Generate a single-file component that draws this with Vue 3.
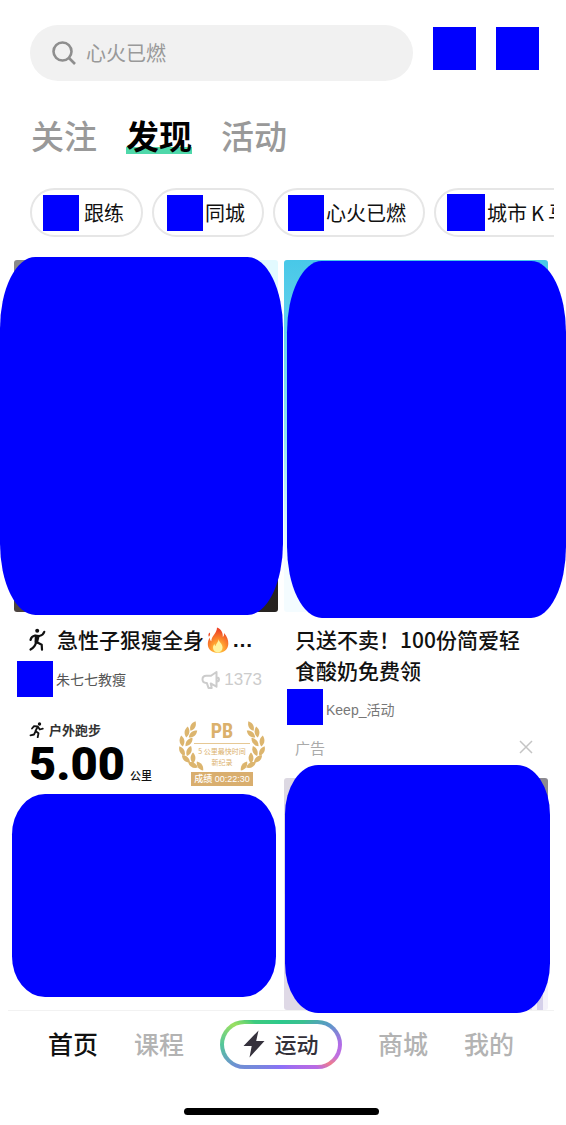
<script setup>
import { ref } from 'vue'

const keyword = ref('')
const activeTab = ref('发现')
const tabs = ['关注', '发现', '活动']
const chips = [
  { label: '跟练', kind: 'first' },
  { label: '同城', kind: '' },
  { label: '心火已燃', kind: '' },
  { label: '城市\u2009K\u2009马', kind: 'large' },
]

// Leaves of the left laurel branch: centre x, centre y, rotation
const leaves = [
  [14, 5, 28], [8, 11, 8], [14, 13, 50],
  [3, 20, -8], [10, 21, 40],
  [3, 30, -28], [10, 30, 22],
  [7, 38, -48], [14, 37, 0],
  [14, 44, -62], [21, 45, -35],
]
</script>

<template>
  <div class="app">
    <header class="header">
      <label class="search">
        <svg class="search-icon" viewBox="0 0 24 24" aria-hidden="true">
          <circle cx="10.5" cy="10.5" r="9" />
          <path d="M17 17l6 6" />
        </svg>
        <input v-model="keyword" type="search" placeholder="心火已燃" aria-label="搜索" />
      </label>
      <button class="block action" aria-label="消息"></button>
      <button class="block action" aria-label="发布"></button>
    </header>

    <nav class="tabs">
      <button
        v-for="t in tabs"
        :key="t"
        :class="['tab', { active: t === activeTab }]"
        @click="activeTab = t"
      >{{ t }}</button>
    </nav>

    <div class="chips">
      <button v-for="c in chips" :key="c.label" :class="['chip', c.kind]">
        <span class="block chip-icon"></span>{{ c.label }}
      </button>
    </div>

    <main class="feed">
      <section class="column">
        <article class="post">
          <div class="media media-video"><div class="block cover cover-video"></div></div>
          <h2 class="title one-line">
            <svg class="dancer" viewBox="0 0 22 24" aria-hidden="true">
              <circle cx="11.200" cy="2.800" r="2" class="solid" />
              <path d="M18.300 3.800c-.6 2.200-2 3.600-5 4.200L9 7.500C6.500 8 5 9.500 4.500 12M10.500 14l5.200 2.700.3 5M10 14.500c-.6 3-2.300 5.300-5.500 7" />
              <path d="M8.800 6.800l5 .6-2 8-3.300-1z" class="solid" />
            </svg>
            <span>急性子狠瘦全身</span>
            <svg class="flame" viewBox="0 0 22 26" role="img" aria-label="火">
              <defs>
                <radialGradient id="flame-fill" cx="50%" cy="88%" r="78%">
                  <stop offset="0" stop-color="#ffd84a" />
                  <stop offset=".45" stop-color="#ff9a2e" />
                  <stop offset="1" stop-color="#ee4527" />
                </radialGradient>
              </defs>
              <path fill="url(#flame-fill)" d="M10 .5c5 2 6 6 5.800 9.500 1-.8 1.400-2 1.200-4 3 3 4.500 7 4.300 11C21 22.500 17 25.800 11 25.800S.8 22.500.8 17c0-3 1-5 2-6.500 0 2 .5 3 1.500 3.800C4.500 8.500 10 6.500 10 .5zM2.500 5.500c1 1.500.8 3-.6 4.300-.8-1.600-.6-3 .6-4.300z" />
              <path fill="#fff3a0" d="M11.500 12c.3 3 4 4.500 4 8.500 0 3-2 4.800-4.700 4.800S6 23.500 6 20.800c0-1.800.8-3 1.500-3.800.1 1.200.5 1.800 1.200 2.200C8.700 16.500 11.500 15.500 11.500 12z" />
            </svg>
            <span class="dots">…</span>
          </h2>
          <div class="author">
            <span class="block avatar"></span>
            <span class="name">朱七七教瘦</span>
            <button class="cheer">
              <svg viewBox="0 0 20 20" aria-hidden="true">
                <path d="M15.500 2L10 5.800H5.200C3 5.800 1.500 7.300 1.500 9.300s1.500 3.600 3.700 3.600h.6l1.700 5h3.200l-1-4.500 5.800 3.300zM16 7.500c2.600.2 2.600 3.800 0 4" />
              </svg>
              1373
            </button>
          </div>
        </article>

        <article class="run">
          <div class="run-head">
            <div class="run-stats">
              <h3 class="run-type">
                <svg viewBox="0 0 16 16" aria-hidden="true">
                  <circle cx="10.500" cy="2" r="1.700" class="solid" />
                  <path d="M3 6.500l2-2.300 3.800.3 2 3 3-.8M8.500 5L6.500 9l3 2.300-.8 4M6.500 9.500L5 12.500l-3.500.8" />
                </svg>
                户外跑步
              </h3>
              <p class="distance"><strong>5.00</strong><span>公里</span></p>
            </div>
            <div class="badge">
              <svg class="laurel" viewBox="0 0 86 50" aria-hidden="true">
                <g v-for="side in [0, 1]" :key="side" :transform="side ? 'translate(86 0) scale(-1 1)' : ''">
                  <path
                    v-for="(l, i) in leaves"
                    :key="i"
                    :transform="`translate(${l[0]} ${l[1]}) rotate(${l[2]})`"
                    d="M0-5.500C3.200-2 3.200 2 0 5.500C-3.200 2-3.200-2 0-5.500z"
                  />
                </g>
              </svg>
              <b class="pb">PB</b>
              <span class="record">5 公里最快时间</span>
              <span class="record-new">新纪录</span>
              <span class="score">成绩 00:22:30</span>
            </div>
          </div>
          <div class="media media-map"><div class="block cover cover-map"></div></div>
        </article>
      </section>

      <section class="column">
        <article class="post promo">
          <div class="media media-poster"><div class="block cover cover-poster"></div></div>
          <h2 class="title">只送不卖！100份简爱轻食酸奶免费领</h2>
          <div class="author">
            <span class="block avatar"></span>
            <span class="name">Keep_活动</span>
          </div>
          <div class="ad-row">
            <span>广告</span>
            <button class="close" aria-label="关闭广告">
              <svg viewBox="0 0 14 14" aria-hidden="true"><path d="M1 1l12 12M13 1L1 13" /></svg>
            </button>
          </div>
        </article>
        <article class="post">
          <div class="media media-photo"><div class="block cover cover-photo"></div></div>
        </article>
      </section>
    </main>

    <footer class="footer">
      <nav class="bottom-nav">
        <a href="#home" class="current">首页</a>
        <a href="#course">课程</a>
        <button class="sport">
          <svg viewBox="0 0 22 28" aria-hidden="true"><path d="M15.500.5L.5 16h8.200L6.500 27.500 21.500 11h-8.300z" /></svg>
          <span>运动</span>
        </button>
        <a href="#mall">商城</a>
        <a href="#me">我的</a>
      </nav>
      <div class="home-bar"></div>
    </footer>
  </div>
</template>

<style>
body {
  margin: 0;
  background: #fff;
}
</style>

<style scoped>
.app {
  display: flex;
  flex-direction: column;
  min-height: 100vh;
  overflow: hidden;
  box-sizing: border-box;
  color: #111;
  font-family: "Liberation Sans", "Noto Sans CJK SC", sans-serif;
}
.app * {
  box-sizing: border-box;
}
button {
  margin: 0;
  padding: 0;
  border: 0;
  background: none;
  color: inherit;
  font: inherit;
  cursor: pointer;
}
h2, h3, p {
  margin: 0;
}
svg {
  display: block;
  flex: none;
}
.block {
  display: block;
  background: #00f;
}

.header {
  display: flex;
  gap: 20px;
  padding: 25px 27px 0 30px;
}
.search {
  display: flex;
  flex: 1;
  align-items: center;
  gap: 10px;
  min-width: 0;
  height: 56px;
  padding: 0 22px;
  border-radius: 28px;
  background: #f1f1f1;
}
.search-icon {
  width: 24px;
  height: 24px;
  fill: none;
  stroke: #8e8e8e;
  stroke-width: 2.600;
}
.search input {
  flex: 1;
  min-width: 0;
  padding: 0;
  border: 0;
  outline: 0;
  background: none;
  font: 20px/28px "Noto Sans CJK SC", sans-serif;
}
.search input::placeholder {
  color: #999;
}
.action {
  width: 43px;
  height: 43px;
  margin-top: 2px;
  background: #00f;
}

.tabs {
  display: flex;
  gap: 29px;
  padding: 32px 31px 0;
}
.tab {
  height: 44px;
  color: #999;
  font: 500 33px/44px "Noto Sans CJK SC", sans-serif;
}
.tab.active {
  background: linear-gradient(#4fd8aa, #4fd8aa) 0 34px / 100% 7px no-repeat;
  color: #000;
  font-weight: 700;
}

.chips {
  display: flex;
  gap: 9px;
  margin: 31px 12px 0 30px;
  overflow: hidden;
}
.chip {
  display: flex;
  flex: none;
  align-items: center;
  gap: 2px;
  height: 49px;
  padding: 0 17px 0 13px;
  border: 2px solid #e6e6e6;
  border-radius: 25px;
  font: 20px/28px "Noto Sans CJK SC", sans-serif;
}
.chip-icon {
  width: 36px;
  height: 36px;
}
.chip.first {
  gap: 5px;
  padding-left: 11px;
}
.chip.large {
  padding-left: 11px;
}
.chip.large .chip-icon {
  width: 38px;
  height: 37px;
}

.feed {
  display: grid;
  flex: 1;
  grid-template-columns: 1fr 1fr;
  gap: 6px;
  padding: 23px 18px 0 14px;
}
.column {
  min-width: 0;
}
.media {
  position: relative;
  border-radius: 3px;
}
.cover {
  position: absolute;
  border-radius: 12.5% / 20%;
}
.media-video {
  aspect-ratio: 3 / 4;
  background: linear-gradient(90deg, #8a8a8a 50%, #e2faff 50%) 0 0 / 100% 50% no-repeat,
    linear-gradient(90deg, #4c4440, #262220) 0 100% / 100% 50% no-repeat;
}
.cover-video {
  inset: -3px -5px -3px -14px;
}
.media-poster {
  aspect-ratio: 3 / 4;
  background: linear-gradient(#48c8e8, #8fe2f0 50%, #f4fcff 85%);
}
.cover-poster {
  inset: 1px -18px -6px 3px;
}
.title {
  margin-top: 12px;
  padding: 0 22px 0 11px;
  color: #111;
  font: 500 21px/31px "Noto Sans CJK SC", sans-serif;
}
.one-line {
  display: flex;
  align-items: center;
  padding: 0 0 0 12px;
  white-space: nowrap;
}
.dancer {
  width: 22px;
  height: 24px;
  margin-right: 9px;
  fill: none;
  stroke: #111;
  stroke-width: 2.200;
  stroke-linecap: round;
  stroke-linejoin: round;
}
.solid {
  fill: #111;
  stroke: none;
}
.flame {
  width: 22px;
  height: 26px;
  margin: 0 3px;
}
.dots {
  font-family: "Liberation Sans", sans-serif;
  font-weight: 700;
}
.author {
  display: flex;
  align-items: center;
  gap: 3px;
  margin-top: 6px;
  padding: 0 16px 0 3px;
}
.avatar {
  width: 36px;
  height: 36px;
}
.name {
  flex: 1;
  padding-top: 2px;
  color: #555;
  font-size: 14px;
  line-height: 20px;
}
.cheer {
  display: flex;
  align-items: center;
  gap: 3px;
  padding-top: 2px;
  color: #ccc;
  font-size: 17px;
  line-height: 20px;
}
.cheer svg {
  width: 20px;
  height: 20px;
  fill: none;
  stroke: #ccc;
  stroke-width: 2;
  stroke-linejoin: round;
}
.promo .author {
  margin-top: 3px;
}
.promo .name {
  padding-top: 5px;
  color: #777;
}
.ad-row {
  display: flex;
  align-items: center;
  justify-content: space-between;
  height: 53px;
  padding: 0 15px 9px 11px;
  color: #aaa;
  font-size: 15px;
}
.close svg {
  width: 14px;
  height: 14px;
  stroke: #c4c4c4;
  stroke-width: 1.500;
}
.media-photo {
  aspect-ratio: 264 / 232;
  background: linear-gradient(90deg, #dcd8e2 50%, #8c8a90 50%) 0 0 / 100% 50% no-repeat,
    linear-gradient(90deg, #dfd9e6 94%, #f4f2fa 94% 96%, #d5d0ea 96% 98%, #f4f2fa 98%) 0 100% / 100% 50% no-repeat;
}
.cover-photo {
  inset: -13px -2px -3px 1px;
}

.run {
  padding-top: 23px;
}
.run-head {
  display: flex;
  justify-content: space-between;
  height: 74px;
  padding: 1px 13px 0 15px;
}
.run-type {
  display: flex;
  align-items: center;
  gap: 4px;
  color: #333;
  font: 700 13px/18px "Noto Sans CJK SC", sans-serif;
}
.run-type svg {
  width: 16px;
  height: 16px;
  fill: none;
  stroke: #111;
  stroke-width: 1.800;
  stroke-linecap: round;
  stroke-linejoin: round;
}
.distance {
  display: flex;
  align-items: baseline;
  gap: 5px;
}
.distance strong {
  color: #000;
  font-family: Roboto, sans-serif;
  font-size: 47px;
  font-weight: 900;
  line-height: 50px;
}
.distance span {
  font: 500 11px/16px "Noto Sans CJK SC", sans-serif;
}
.badge {
  position: relative;
  display: flex;
  flex-direction: column;
  align-items: center;
  width: 86px;
  height: 65px;
  color: #dbb16c;
  font: 7px/11px "Noto Sans CJK SC", sans-serif;
}
.laurel {
  position: absolute;
  top: 0;
  left: 0;
  width: 86px;
  height: 50px;
  fill: #dcb56e;
}
.pb {
  width: 56px;
  height: 23px;
  border-bottom: 1px solid #e6c894;
  font: 700 20px/20px "Roboto Condensed", Roboto, sans-serif;
  text-align: center;
}
.record {
  margin-top: 2px;
}
.score {
  width: 62px;
  height: 14px;
  margin-top: 4px;
  background: #d9ae6e;
  color: #fff;
  font: 500 9px/14px "Liberation Sans", "Noto Sans CJK SC", sans-serif;
  text-align: center;
}
.media-map {
  height: 201px;
  margin: 0 2px 0 12px;
}
.cover-map {
  inset: 0 0 -2px -14px;
}

.footer {
  padding: 0 12px 10px 8px;
}
.bottom-nav {
  display: flex;
  align-items: center;
  justify-content: space-between;
  height: 67px;
  padding: 0 40px;
  border-top: 1px solid #f2f2f2;
  font: 500 25px/34px "Noto Sans CJK SC", sans-serif;
}
.bottom-nav a {
  padding-bottom: 3px;
  color: #b3b3b3;
  text-decoration: none;
}
.bottom-nav .current {
  color: #111;
}
.sport {
  display: flex;
  align-items: center;
  justify-content: center;
  gap: 9px;
  width: 122px;
  height: 49px;
  border: 4px solid transparent;
  border-radius: 25px;
  background: linear-gradient(#fff, #fff) padding-box,
    conic-gradient(#2cc98c, #3ac090 45deg, #5b98c8 68deg, #b36be8 90deg, #c070e0 102deg, #ee7c8c 111deg, #b86ae4 122deg, #8c70f8 180deg, #6f8fd4 245deg, #54c79a 270deg, #9be060 293deg, #3cca80 310deg, #2cc98c) border-box;
  color: #333039;
  font-size: 22px;
}
.sport span {
  padding-bottom: 2px;
}
.sport svg {
  width: 22px;
  height: 28px;
  fill: #35313c;
}
.home-bar {
  width: 195px;
  height: 7px;
  margin: 31px auto 0;
  border-radius: 4px;
  background: #000;
}
</style>
